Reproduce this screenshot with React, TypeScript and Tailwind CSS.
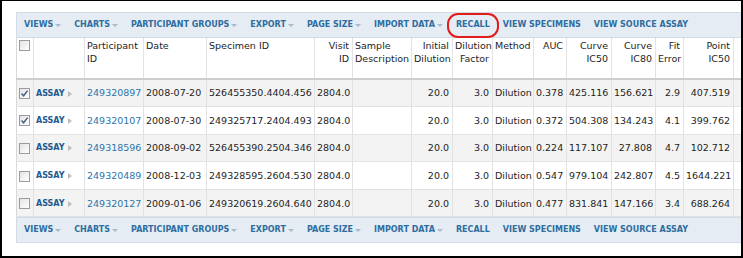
import { Fragment } from "react";

type Row = {
  checked: boolean;
  pid: string;
  date: string;
  specimen: string;
  auc: string;
  c50: string;
  c80: string;
  fit: string;
  point: string;
  next: string;
};

const rows: Row[] = [
  { checked: true, pid: "249320897", date: "2008-07-20", specimen: "526455350.4404.456", auc: "0.378", c50: "425.116", c80: "156.621", fit: "2.9", point: "407.519", next: "1437.512" },
  { checked: true, pid: "249320107", date: "2008-07-30", specimen: "249325717.2404.493", auc: "0.372", c50: "504.308", c80: "134.243", fit: "4.1", point: "399.762", next: "1380.220" },
  { checked: false, pid: "249318596", date: "2008-09-02", specimen: "526455390.2504.346", auc: "0.224", c50: "117.107", c80: "27.808", fit: "4.7", point: "102.712", next: "289.541" },
  { checked: false, pid: "249320489", date: "2008-12-03", specimen: "249328595.2604.530", auc: "0.547", c50: "979.104", c80: "242.807", fit: "4.5", point: "1644.221", next: "1935.004" },
  { checked: false, pid: "249320127", date: "2009-01-06", specimen: "249320619.2604.640", auc: "0.477", c50: "831.841", c80: "147.166", fit: "3.4", point: "688.264", next: "188.392" },
];

const menus = [
  { label: "Views", drop: true },
  { label: "Charts", drop: true },
  { label: "Participant Groups", drop: true },
  { label: "Export", drop: true },
  { label: "Page Size", drop: true },
  { label: "Import Data", drop: true },
  { label: "Recall", drop: false },
  { label: "View Specimens", drop: false },
  { label: "View Source Assay", drop: false },
];

const widths = [17, 51, 59, 63, 108, 38, 59, 41, 40, 41, 33, 45, 44, 28, 50, 60];

const Checkbox = ({ checked }: { checked: boolean }) => (
  <span className="flex w-[11px] h-[11px] items-center justify-center border border-[#9c9c9c] bg-gradient-to-br from-[#e4e4e4] to-white">
    {checked && (
      <svg width="9" height="9" viewBox="0 0 9 9">
        <path d="M1.5 4.5 L3.6 6.8 L7.6 1.6" fill="none" stroke="#4b5d86" strokeWidth="1.5" />
      </svg>
    )}
  </span>
);

const Toolbar = ({ recall }: { recall?: boolean }) => (
  <div className="relative flex h-[26px] items-center gap-[13px] border border-[#d3dce6] bg-[#e5ecf3] pl-[7px] font-['DejaVu_Sans',sans-serif] text-[8px] font-bold uppercase text-[#2e6d9f]">
    {menus.map((m) => (
      <span key={m.label} className="flex items-center whitespace-nowrap">
        {m.label}
        {m.drop && (
          <span className="ml-[2px] mt-[1px] border-x-[3px] border-t-[3px] border-x-transparent border-t-[#a8bacb]" />
        )}
      </span>
    ))}
    {recall && (
      <span className="absolute left-[430px] top-[0px] h-[25px] w-[52px] rounded-[11px] border-2 border-[#e21b1b]" />
    )}
  </div>
);

const th = "border-r border-[#e2e2e2] border-b-2 border-b-[#cdcdcd] align-top pt-[2px] pl-[2px] pr-[3px] font-normal leading-[12.7px]";
const td = "border-r border-b border-[#e2e2e2] pt-[1px] pl-[2px] pr-[3px] whitespace-nowrap";

export default function App() {
  return (
    <div className="h-[258px] w-[743px] overflow-hidden border-b-2 border-l-2 border-r-2 border-t border-black bg-white">
      <div className="ml-[14px] mt-[11px] w-[777px]">
        <Toolbar recall />
        <table className="table-fixed border-collapse border-l border-[#d8d8d8] font-['DejaVu_Sans',sans-serif] text-[9.5px] text-[#1e1e1e]" style={{ width: 777 }}>
          <colgroup>
            {widths.map((w, i) => (
              <col key={i} style={{ width: w }} />
            ))}
          </colgroup>
          <thead>
            <tr className="h-[41px] bg-white">
              <th className={`${th} pl-[1px]`}>
                <Checkbox checked={false} />
              </th>
              <th className={th}></th>
              <th className={`${th} text-left`}>Participant ID</th>
              <th className={`${th} text-left`}>Date</th>
              <th className={`${th} text-left`}>Specimen ID</th>
              <th className={`${th} text-right`}>Visit ID</th>
              <th className={`${th} text-left`}>Sample Description</th>
              <th className={`${th} text-right`}>Initial Dilution</th>
              <th className={`${th} text-right`}>Dilution Factor</th>
              <th className={`${th} text-left`}>Method</th>
              <th className={`${th} text-right`}>AUC</th>
              <th className={`${th} text-right`}>Curve IC50</th>
              <th className={`${th} text-right`}>Curve IC80</th>
              <th className={`${th} text-right`}>Fit Error</th>
              <th className={`${th} text-right`}>Point IC50</th>
              <th className={`${th} text-right`}></th>
            </tr>
          </thead>
          <tbody>
            {rows.map((r, i) => (
              <Fragment key={r.pid}>
                <tr className={`h-[27.6px] ${i % 2 === 0 ? "bg-[#f3f3f3]" : "bg-white"}`}>
                  <td className={`${td} pl-[1px]`}>
                    <Checkbox checked={r.checked} />
                  </td>
                  <td className={td}>
                    <span className="flex items-center text-[8px] font-bold text-[#1d5a90]">
                      ASSAY
                      <span className="ml-[3px] border-y-[3px] border-l-[4px] border-y-transparent border-l-[#bcbcbc]" />
                    </span>
                  </td>
                  <td className={`${td} text-[#2a74ad]`}>{r.pid}</td>
                  <td className={td}>{r.date}</td>
                  <td className={td}>{r.specimen}</td>
                  <td className={td}>2804.0</td>
                  <td className={td}></td>
                  <td className={`${td} text-right`}>20.0</td>
                  <td className={`${td} text-right`}>3.0</td>
                  <td className={td}>Dilution</td>
                  <td className={`${td} text-right`}>{r.auc}</td>
                  <td className={`${td} text-right`}>{r.c50}</td>
                  <td className={`${td} text-right`}>{r.c80}</td>
                  <td className={`${td} text-right`}>{r.fit}</td>
                  <td className={`${td} text-right`}>{r.point}</td>
                  <td className={`${td} text-right`}>{r.next}</td>
                </tr>
              </Fragment>
            ))}
          </tbody>
        </table>
        <Toolbar />
      </div>
    </div>
  );
}
